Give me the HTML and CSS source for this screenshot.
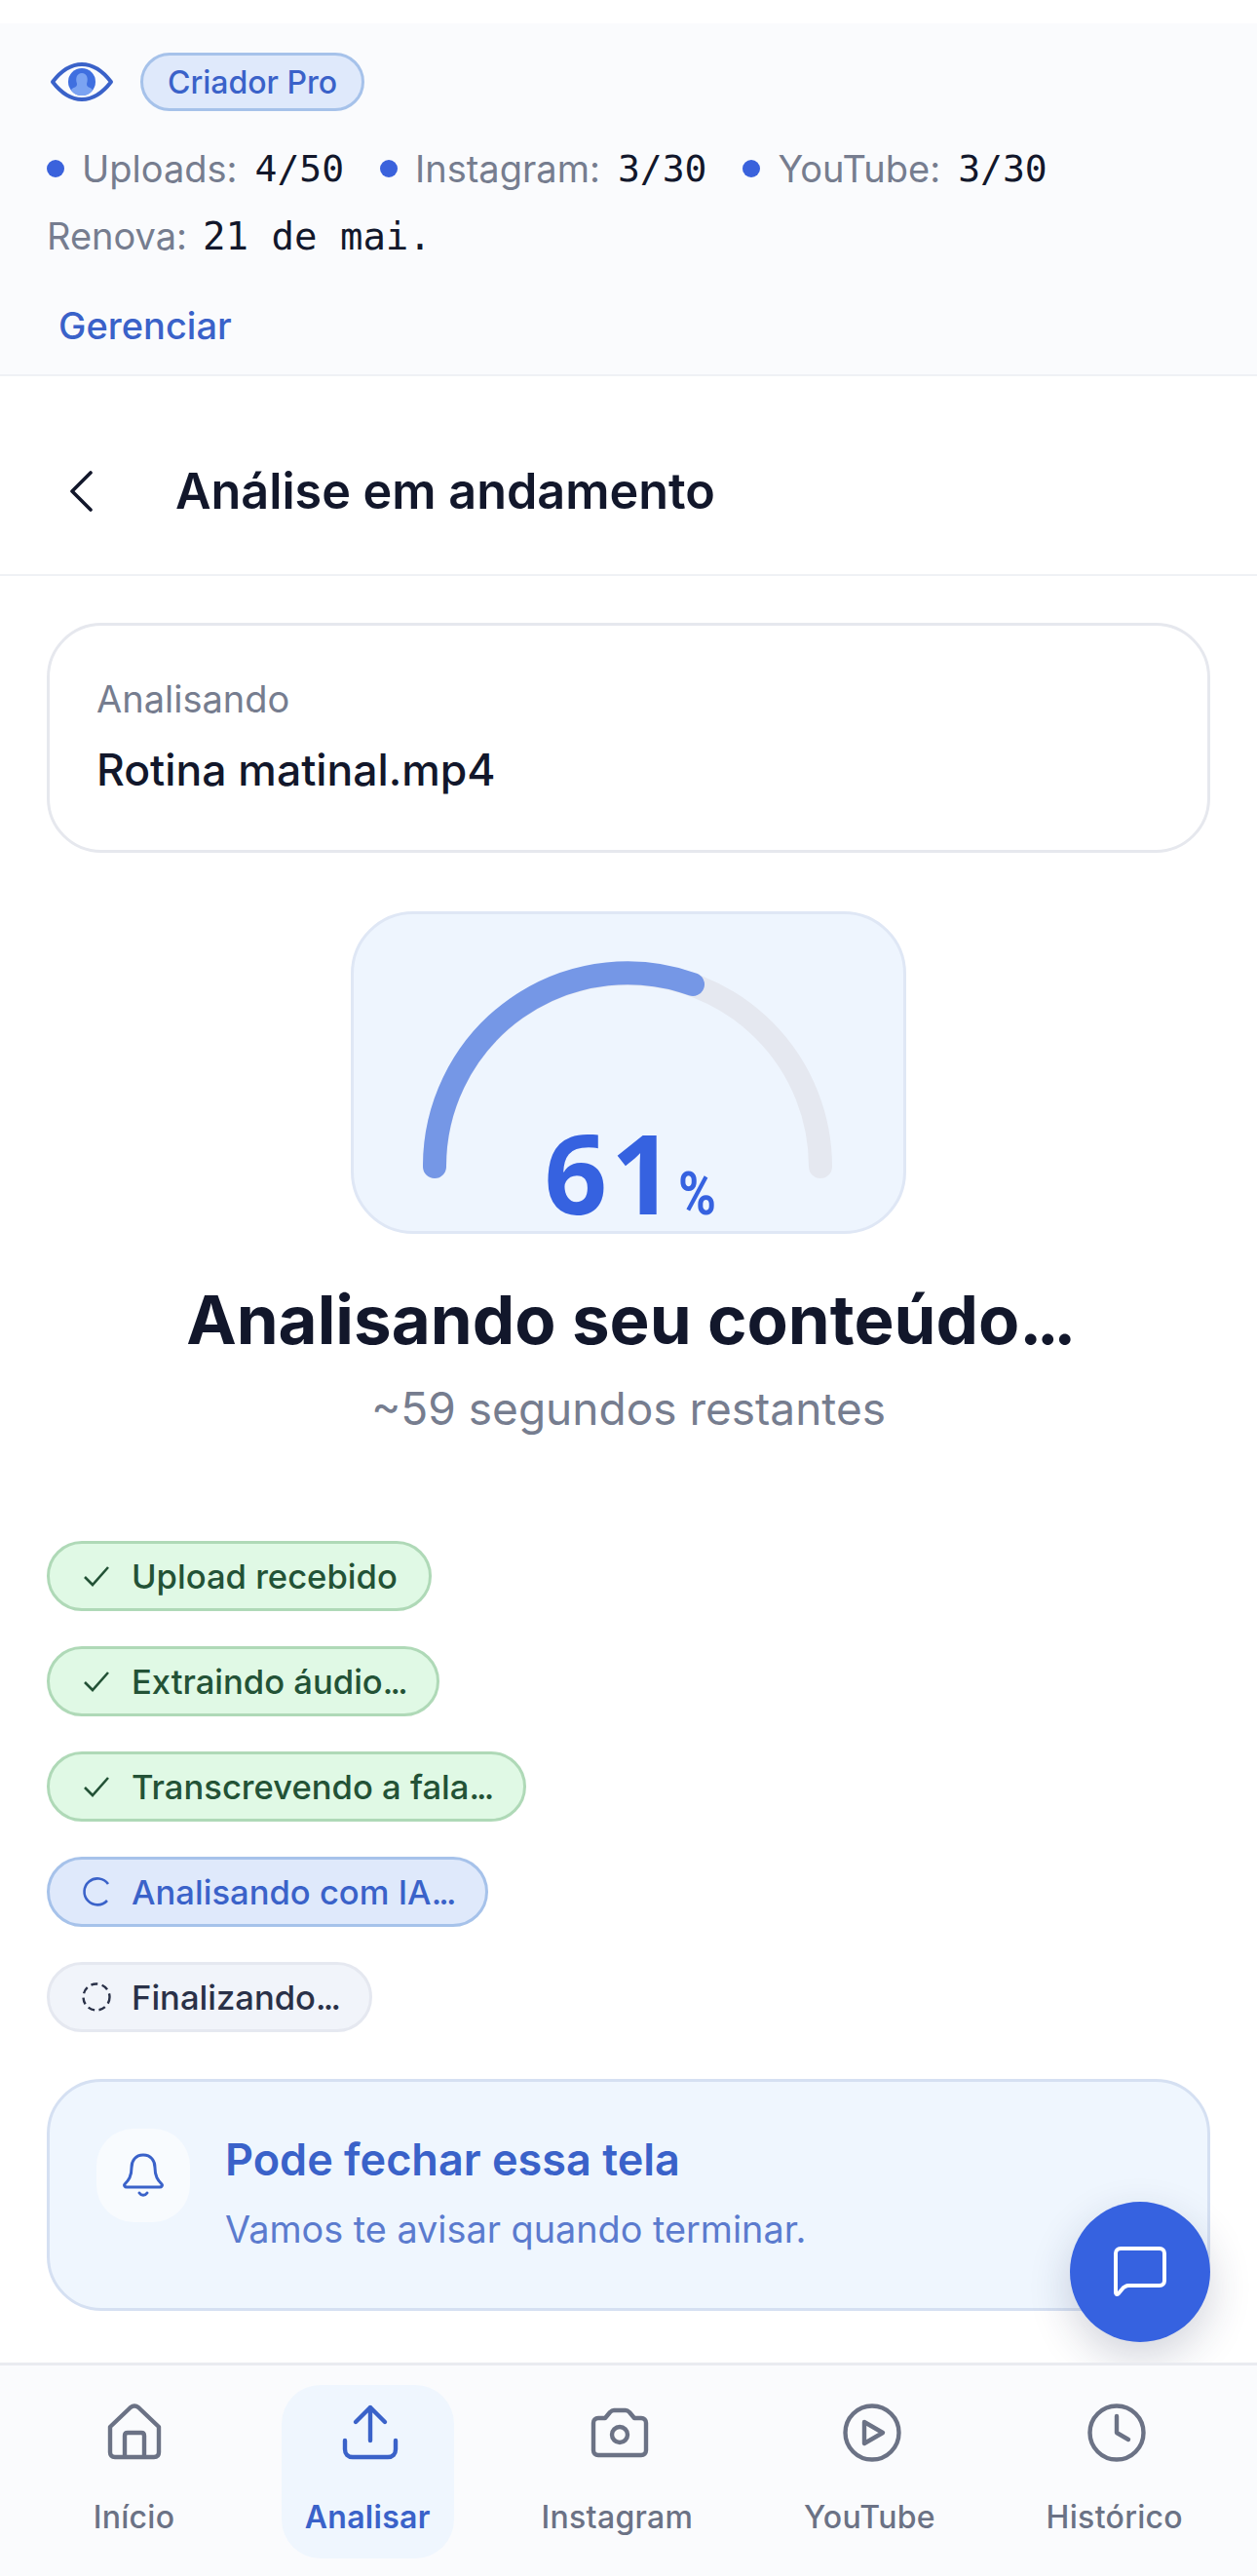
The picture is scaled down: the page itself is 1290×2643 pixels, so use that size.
FILE: index.html
```html
<!DOCTYPE html>
<html lang="pt-BR">
<head>
    <meta charset="UTF-8">
    <meta name="viewport" content="width=device-width, initial-scale=1.0">
    <title>Análise em andamento</title>
    <link rel="stylesheet" href="styles.css">
</head>
<body>
    <div class="app">
        <div class="plan">
            <div class="plan-top">
                <svg class="plan-eye" width="66" height="44" viewBox="0 0 66 44">
                    <path d="M3 22 C13 9 23 4 33 4 C43 4 53 9 63 22 C53 35 43 40 33 40 C23 40 13 35 3 22 Z" fill="none" stroke="#3a62c9" stroke-width="4" stroke-linejoin="round"/>
                    <circle cx="33" cy="22" r="14" fill="#3f6fe0"/>
                    <path d="M22 30 C25 27 28 28 28 24 C26 18 28 13 33 13 C38 13 40 18 38 24 C38 28 41 27 44 30 C42 34 38 36 33 36 C28 36 24 34 22 30 Z" fill="#7ba3f2"/>
                </svg>
                <span class="plan-badge">Criador Pro</span>
            </div>
            <div class="plan-stats">
                <span class="stat"><i class="dot"></i>Uploads: <b>4/50</b></span>
                <span class="stat"><i class="dot"></i>Instagram: <b>3/30</b></span>
                <span class="stat"><i class="dot"></i>YouTube: <b>3/30</b></span>
            </div>
            <div class="plan-renew">Renova: <b>21 de mai.</b></div>
            <a class="plan-link">Gerenciar</a>
        </div>

        <div class="topbar">
            <svg class="back" width="28" height="44" viewBox="0 0 28 44"><path d="M24 3 L5 22 L24 41" fill="none" stroke="#12172b" stroke-width="3.6" stroke-linecap="round" stroke-linejoin="round"/></svg>
            <h1>Análise em andamento</h1>
        </div>

        <div class="main">
            <div class="file-card">
                <div class="file-label">Analisando</div>
                <div class="file-name">Rotina matinal.mp4</div>
            </div>

            <div class="gauge">
                <svg class="gauge-arc" width="424" height="230" viewBox="0 0 424 230">
                    <path d="M12 218 A198 198 0 0 1 408 218" fill="none" stroke="#e5e8f0" stroke-width="24" stroke-linecap="round"/>
                    <path d="M12 218 A198 198 0 0 1 277 31" fill="none" stroke="#7597e6" stroke-width="24" stroke-linecap="round"/>
                </svg>
                <div class="gauge-value">61<span>%</span></div>
            </div>

            <h2 class="status-title">Analisando seu conteúdo<span class="dots">...</span></h2>
            <p class="status-sub">~59 segundos restantes</p>

            <div class="steps">
                <div class="step done">
                    <svg width="32" height="32" viewBox="0 0 32 32"><path d="M4 17 L12 25 L28 7" fill="none" stroke="#235236" stroke-width="2.6"/></svg>
                    <span>Upload recebido</span>
                </div>
                <div class="step done">
                    <svg width="32" height="32" viewBox="0 0 32 32"><path d="M4 17 L12 25 L28 7" fill="none" stroke="#235236" stroke-width="2.6"/></svg>
                    <span>Extraindo áudio<span class="dots">...</span></span>
                </div>
                <div class="step done">
                    <svg width="32" height="32" viewBox="0 0 32 32"><path d="M4 17 L12 25 L28 7" fill="none" stroke="#235236" stroke-width="2.6"/></svg>
                    <span>Transcrevendo a fala<span class="dots">...</span></span>
                </div>
                <div class="step active">
                    <svg width="32" height="32" viewBox="0 0 32 32"><path d="M28 8 A13.5 13.5 0 1 0 27 25" fill="none" stroke="#3a62c9" stroke-width="2.6"/></svg>
                    <span>Analisando com IA<span class="dots">...</span></span>
                </div>
                <div class="step waiting">
                    <svg width="32" height="32" viewBox="0 0 32 32"><circle cx="16" cy="16" r="13.5" fill="none" stroke="#2a3148" stroke-width="2.4" stroke-dasharray="7 4.5"/></svg>
                    <span>Finalizando<span class="dots">...</span></span>
                </div>
            </div>

            <div class="notice">
                <div class="notice-icon">
                    <svg width="42" height="46" viewBox="0 0 42 46">
                        <path d="M21 2 C13 2 9 8 9 15 C9 24 6 28 2 32 C1 33 2 35 4 35 H38 C40 35 41 33 40 32 C36 28 33 24 33 15 C33 8 29 2 21 2 Z" fill="none" stroke="#3a62c9" stroke-width="3" stroke-linejoin="round"/>
                        <path d="M17 41 C19 44 23 44 25 41" fill="none" stroke="#3a62c9" stroke-width="3" stroke-linecap="round"/>
                    </svg>
                </div>
                <div>
                    <div class="notice-title">Pode fechar essa tela</div>
                    <div class="notice-text">Vamos te avisar quando terminar.</div>
                </div>
            </div>
        </div>

        <div class="fab">
            <svg width="58" height="54" viewBox="0 0 58 54"><path d="M9 3 H49 C52 3 54 5 54 8 V36 C54 39 52 41 49 41 H17 C15 41 14 42 12 43 L7 49 C5 51 4 50 4 48 V8 C4 5 6 3 9 3 Z" fill="none" stroke="#fff" stroke-width="4" stroke-linejoin="round"/></svg>
        </div>

        <div class="tabbar">
            <div class="tab">
                <svg width="60" height="60" viewBox="0 0 60 60"><path d="M5 24 L26 4 Q30 1 34 4 L55 24 V50 Q55 55 50 55 H10 Q5 55 5 50 Z" fill="none" stroke="#6b7285" stroke-width="4.4" stroke-linejoin="round"/><path d="M20 55 V33 Q20 30 23 30 H37 Q40 30 40 33 V55" fill="none" stroke="#6b7285" stroke-width="4.4"/></svg>
                <span>Início</span>
            </div>
            <div class="tab current">
                <svg width="60" height="60" viewBox="0 0 60 60"><path d="M30 38 V4 M15 19 L30 4 L45 19" fill="none" stroke="#3a62c9" stroke-width="4.4" stroke-linecap="round" stroke-linejoin="round"/><path d="M4 38 V47 C4 52 7 55 12 55 H48 C53 55 56 52 56 47 V38" fill="none" stroke="#3a62c9" stroke-width="4.4" stroke-linecap="round"/></svg>
                <span>Analisar</span>
            </div>
            <div class="tab">
                <svg width="60" height="60" viewBox="0 0 60 60"><path d="M8 15 H15 L20 9 C21 8 22 7 24 7 H36 C38 7 39 8 40 9 L45 15 H52 C55 15 57 17 57 20 V48 C57 51 55 53 52 53 H8 C5 53 3 51 3 48 V20 C3 17 5 15 8 15 Z" fill="none" stroke="#6b7285" stroke-width="4.4" stroke-linejoin="round"/><circle cx="30" cy="32" r="8" fill="none" stroke="#6b7285" stroke-width="4.4"/></svg>
                <span>Instagram</span>
            </div>
            <div class="tab">
                <svg width="60" height="60" viewBox="0 0 60 60"><circle cx="30" cy="30" r="27.5" fill="none" stroke="#6b7285" stroke-width="4.4"/><path d="M22 19 L41 30 L22 41 Z" fill="none" stroke="#6b7285" stroke-width="4.4" stroke-linejoin="round"/></svg>
                <span>YouTube</span>
            </div>
            <div class="tab">
                <svg width="60" height="60" viewBox="0 0 60 60"><circle cx="30" cy="30" r="27.5" fill="none" stroke="#6b7285" stroke-width="4.4"/><path d="M30 13 V30 L42 37" fill="none" stroke="#6b7285" stroke-width="4.4" stroke-linecap="round" stroke-linejoin="round"/></svg>
                <span>Histórico</span>
            </div>
        </div>
    </div>
</body>
</html>
```

FILE: styles.css
```css
* {
    box-sizing: border-box;
}
html, body {
    margin: 0;
    padding: 0;
    background: #fff;
}
body {
    font-family: Inter, "Noto Sans", sans-serif;
    color: #12172b;
}
.app {
    position: relative;
    width: 1290px;
    height: 2643px;
    padding-top: 24px;
    overflow: hidden;
    display: flex;
    flex-direction: column;
}
.plan {
    height: 362px;
    padding: 30px 48px 0;
    background: #fafbfd;
    border-bottom: 2px solid #eff1f5;
}
.plan-top {
    display: flex;
    align-items: center;
    gap: 27px;
    padding-left: 3px;
}
.plan-badge {
    height: 60px;
    padding: 0 25px;
    display: flex;
    align-items: center;
    background: #dfe9fb;
    border: 3px solid #a6c2ea;
    border-radius: 30px;
    color: #3a62c9;
    font-size: 32px;
    font-weight: 500;
}
.plan-stats {
    display: flex;
    gap: 37px;
    margin-top: 36px;
}
.stat {
    display: flex;
    align-items: center;
    color: #767d8f;
    font-size: 38px;
}
.stat b, .plan-renew b {
    font-family: "DejaVu Sans Mono", "Liberation Mono", monospace;
    font-weight: 400;
    color: #12172b;
    font-size: 38px;
    margin-left: 18px;
}
.dot {
    width: 18px;
    height: 18px;
    margin-right: 18px;
    border-radius: 50%;
    background: #3a62dc;
}
.plan-renew {
    display: flex;
    align-items: center;
    margin-top: 23px;
    color: #767d8f;
    font-size: 38px;
}
.plan-renew b {
    margin-left: 16px;
    font-size: 39px;
}
.plan-link {
    display: block;
    margin: 46px 0 0 12px;
    color: #3a62c9;
    font-size: 38px;
    font-weight: 500;
}
.topbar {
    height: 205px;
    padding: 32px 0 0 69px;
    display: flex;
    align-items: center;
    gap: 83px;
    border-bottom: 2px solid #eff1f5;
}
.topbar h1 {
    margin: 0;
    font-size: 50.3px;
    font-weight: 600;
}
.main {
    padding: 48px 48px 0;
    display: flex;
    flex-direction: column;
}
.file-card {
    height: 236px;
    padding: 52px 48px 0;
    border: 3px solid #e6e8ee;
    border-radius: 56px;
}
.file-label {
    color: #767d8f;
    font-size: 38px;
}
.file-name {
    margin-top: 23px;
    font-size: 44.5px;
    font-weight: 500;
}
.gauge {
    position: relative;
    align-self: center;
    width: 570px;
    height: 331px;
    margin-top: 60px;
    background: #eef5fe;
    border: 3px solid #dfe7f5;
    border-radius: 64px;
}
.gauge-arc {
    display: block;
    margin: 41px 0 0 71px;
}
.gauge-value {
    position: absolute;
    left: 10px;
    right: 0;
    bottom: -2px;
    text-align: center;
    color: #3662e0;
    font-family: "Noto Sans", sans-serif;
    font-size: 113px;
    font-weight: 700;
    line-height: 80px;
    letter-spacing: 4px;
}
.gauge-value span {
    display: inline-block;
    font-family: Roboto, sans-serif;
    font-size: 62px;
    letter-spacing: 0;
    transform: scaleX(0.85);
    transform-origin: left;
}
.status-title {
    margin: 43px 0 0;
    text-align: center;
    font-size: 69px;
    font-weight: 700;
    line-height: 90px;
}
.dots {
    letter-spacing: -0.08em;
}
.status-sub {
    margin: 16px 0 0;
    text-align: center;
    color: #767d8f;
    font-size: 46px;
    line-height: 60px;
}
.steps {
    margin-top: 106px;
    display: flex;
    flex-direction: column;
    align-items: flex-start;
    gap: 36px;
}
.step {
    height: 72px;
    padding: 0 32px;
    display: flex;
    align-items: center;
    gap: 20px;
    border: 3px solid;
    border-radius: 36px;
    font-size: 34.6px;
    font-weight: 500;
}
.step.done {
    background: #e0f9e5;
    border-color: #afd9b7;
    color: #235236;
}
.step.active {
    background: #dfe9fb;
    border-color: #a6c2ea;
    color: #3a62c9;
}
.step.waiting {
    background: #f1f4fa;
    border-color: #e5e8f0;
    color: #2a3148;
}
.notice {
    height: 238px;
    margin-top: 48px;
    padding: 48px;
    display: flex;
    align-items: flex-start;
    gap: 36px;
    background: #eff6fe;
    border: 3px solid #d5e0f2;
    border-radius: 56px;
}
.notice-icon {
    flex: none;
    width: 96px;
    height: 96px;
    display: flex;
    align-items: center;
    justify-content: center;
    background: #f8fbfe;
    border-radius: 38px;
}
.notice-title {
    color: #3a62c9;
    font-size: 45px;
    font-weight: 600;
    line-height: 54px;
    margin-top: 5px;
}
.notice-text {
    margin-top: 20px;
    color: #5b7bce;
    font-size: 37.8px;
    line-height: 48px;
}
.fab {
    position: absolute;
    left: 1098px;
    top: 2259px;
    width: 144px;
    height: 144px;
    display: flex;
    align-items: center;
    justify-content: center;
    background: #3662e0;
    border-radius: 50%;
    box-shadow: 0 16px 44px rgba(30, 40, 80, 0.2);
}
.tabbar {
    position: absolute;
    left: 0;
    right: 0;
    bottom: 0;
    height: 219px;
    padding: 20px 52px 0;
    display: flex;
    justify-content: space-between;
    background: #fafbfd;
    border-top: 3px solid #e9ebf0;
}
.tab {
    min-width: 171px;
    height: 178px;
    padding: 19px 24px 0;
    display: flex;
    flex-direction: column;
    align-items: center;
    gap: 37px;
    color: #6b7285;
    font-size: 32px;
    font-weight: 500;
    letter-spacing: 0.3px;
    border-radius: 40px;
}
.tab svg {
    flex: none;
}
.tab:not(:first-child) svg {
    margin-left: 5px;
}
.tab.current {
    background: #eff6fe;
    color: #3a62c9;
    font-weight: 600;
}
```
